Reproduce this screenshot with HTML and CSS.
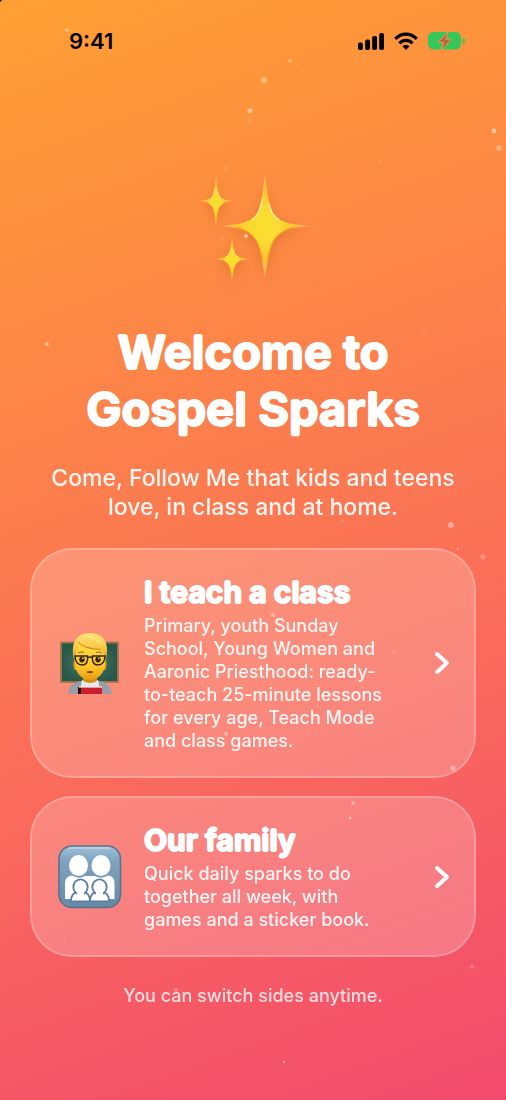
FILE: index.html
```html
<!DOCTYPE html>
<html lang="en">
<head>
<meta charset="utf-8">
<meta name="viewport" content="width=device-width, initial-scale=1">
<title>Gospel Sparks</title>
<link rel="stylesheet" href="styles.css">
</head>
<body>
<div class="screen">
  <header class="status">
    <span class="clock">9:41</span>
    <span class="indicators">
      <svg width="26" height="18" viewBox="0 0 26 18" aria-label="Signal"><rect x="0" y="10.500" width="4.800" height="7.500" rx="1.800"/><rect x="7.200" y="7.500" width="4.800" height="10.500" rx="1.800"/><rect x="14.200" y="4" width="4.800" height="14" rx="1.800"/><rect x="21.200" y="1" width="4.800" height="17" rx="1.800"/></svg>
      <svg width="24" height="18" viewBox="0 0 24 18" aria-label="Wi-Fi"><g fill="none" stroke="#000" stroke-width="3.200"><path d="M1.200 6.900Q6 2.100 12 2.100T22.800 6.900"/><path d="M5.400 11.300Q8.300 8.400 12 8.400T18.600 11.300"/></g><path d="M8.400 14.300Q12 11.200 15.600 14.300L12 18z"/></svg>
      <svg width="38" height="20" viewBox="0 0 38 20" aria-label="Battery charging"><rect x="0" y="1" width="33" height="17.500" rx="5.500" fill="#34c759"/><path d="M34.500 6.500q3 .8 3 3.200t-3 3.200z" fill="#34c759" opacity=".75"/><path d="M20.500.3 10 11.300h5.500L13 19.500l10.500-11.300h-5.600z" fill="#b9693a" stroke="#ff9247" stroke-width="1"/></svg>
    </span>
  </header>

  <main class="content">
    <svg class="sparkles" width="120" height="110" viewBox="0 0 120 110" aria-hidden="true">
      <defs>
        <radialGradient id="gold"><stop offset="0" stop-color="#f8e02c"/><stop offset=".35" stop-color="#fbd932"/><stop offset=".6" stop-color="#ffc531"/><stop offset=".85" stop-color="#ffbd52" stop-opacity=".9"/><stop offset="1" stop-color="#ffb670" stop-opacity=".55"/></radialGradient>
        <g id="star">
          <path fill="url(#gold)" d="M0-52C2.500-32 4-20 8-13 12-6 20-3.500 28-2L45 0 28 2C19 4 13 8 9 14 5 21 3 32 0 52-3 32-5 21-9 14-13 8-19 4-28 2L-45 0-28-2C-20-3.500-12-6-8-13-4-20-2.500-32 0-52z"/>
          <path fill="none" stroke="#fff3b0" stroke-width="1.500" stroke-linecap="round" opacity=".7" d="M-2.500-27C-4-18-7-10-12-7M4-22C6-14 9-9 14-6.500"/>
          <path fill="none" stroke="#f2a01c" stroke-width="1.500" stroke-linecap="round" opacity=".75" d="M28 1.500C19 4 13 8 9 14 6 19 4 26 2.500 34M-28 1.500C-19 4-13 8-9 14-6 19-4 26-2.500 34"/>
        </g>
      </defs>
      <use href="#star" x="72" y="54"/>
      <use href="#star" transform="translate(23 29) scale(.37 .48)"/>
      <use href="#star" transform="translate(39 87) scale(.41 .41)"/>
    </svg>
    <h1 class="title">Welcome to<br>Gospel Sparks</h1>
    <p class="lead">Come, Follow Me that kids and teens love, in class and at home.</p>

    <div class="choices">
      <button class="card" type="button">
        <svg class="emoji" width="64" height="64" viewBox="0 0 64 64" aria-hidden="true">
          <defs>
            <linearGradient id="skin" x1="0" y1="0" x2="0" y2="1"><stop offset="0" stop-color="#ffdc4a"/><stop offset=".65" stop-color="#ffc928"/><stop offset="1" stop-color="#e99b12"/></linearGradient>
            <linearGradient id="hair" x1="0" y1="0" x2="0" y2="1"><stop offset="0" stop-color="#ffe476"/><stop offset=".6" stop-color="#f9c341"/><stop offset="1" stop-color="#d98f1d"/></linearGradient>
            <radialGradient id="board"><stop offset="0" stop-color="#4d8069"/><stop offset="1" stop-color="#28584a"/></radialGradient>
          </defs>
          <rect x="3" y="11.500" width="57" height="39.500" fill="url(#board)" stroke="#a3754a" stroke-width="1.800"/>
          <path d="M10 63c1-8 4-11 13-13h18c9 2 12 5 13 13z" fill="#9a9da5"/>
          <path d="M24 49h16l3 14H21z" fill="#e8e9ee"/>
          <path d="M25 44h14v6q-7 4-14 0z" fill="#d68f12"/>
          <path d="M17 26c-2 4-2 9-.500 13h3V26zM47 26c2 4 2 9 .500 13h-3V26z" fill="#dc9b20"/>
          <path d="M17 19c1-16 29-16 30 0v13c0 10-7 17-15 17s-15-7-15-17z" fill="url(#skin)"/>
          <path d="M16 29C12 11 19 2 32 2s20 9 16 27l-2-2c0-4-1-7-3-9-9 1-17-2-22-7-1 6-3 9-4 16z" fill="url(#hair)"/>
          <path d="M20 11q6 7 23 7.500" fill="none" stroke="#c9821a" stroke-width="1"/>
          <path d="M24 6q9-3 18 6" fill="none" stroke="#fff1a6" stroke-width="1.200" opacity=".7"/>
          <path d="M20 22q3-2 6-.5M38 21.500q3-1.500 6 .5" stroke="#9b641d" stroke-width="1" fill="none"/>
          <ellipse cx="24" cy="28.500" rx="2.700" ry="3" fill="#41220f"/><ellipse cx="40" cy="28.500" rx="2.700" ry="3" fill="#41220f"/>
          <circle cx="24.800" cy="27.300" r=".8" fill="#fff"/><circle cx="40.800" cy="27.300" r=".8" fill="#fff"/>
          <path d="M17 25h12.500q1 9-5.500 9t-7-9zM34.500 25H47q-.5 9-7 9t-5.500-9zM29.500 27q2.500-2 5 0" fill="none" stroke="#34271f" stroke-width="1.500"/>
          <path d="M29 41q3-1 6 0-3 1.600-6 0z" fill="#8d3d18" stroke="#6f3314" stroke-width=".7"/>
          <path d="M20 56h24v7H20z" fill="#c81f2b"/><path d="M20 56h3v7h-3z" fill="#220d16"/><path d="M21 56h23" stroke="#f0e3e2" stroke-width="1.300"/>
        </svg>
        <span class="copy">
          <span class="heading">I teach a class</span>
          <span class="detail">Primary, youth Sunday School, Young Women and Aaronic Priesthood: ready-to-teach 25-minute lessons for every age, Teach Mode and class games.</span>
        </span>
        <svg class="chevron" width="16" height="24" viewBox="0 0 16 24" aria-hidden="true"><path d="M3 3l10 9-10 9"/></svg>
      </button>

      <button class="card" type="button">
        <svg class="emoji" width="64" height="64" viewBox="0 0 64 64" aria-hidden="true">
          <defs><linearGradient id="tile" x1="0" y1="0" x2="0" y2="1"><stop offset="0" stop-color="#a0bfd6"/><stop offset=".25" stop-color="#7fa3bf"/><stop offset="1" stop-color="#6689a6"/></linearGradient></defs>
          <rect x="1" y="1" width="61.500" height="61.500" rx="13" fill="url(#tile)" stroke="#56748e" stroke-width="1.600"/>
          <path d="M11 3h41" stroke="#c5dceb" stroke-width="1.300" stroke-linecap="round" opacity=".8"/>
          <g fill="#fff"><ellipse cx="20.500" cy="20.500" rx="9.500" ry="10.500"/><ellipse cx="43" cy="20.500" rx="9.500" ry="10.500"/><path d="M7 54V38q0-7 7-7.500 6.500 4 13 .5h10q6.500 3.500 13-.5 6.500.5 6.500 7.500v16z"/></g>
          <g fill="#fff" stroke="#5b7d9c" stroke-width="3.600" stroke-linejoin="round" paint-order="stroke">
            <path d="M14 55.500q0-6.500 6-8h5q6 1.500 6 8z"/>
            <path d="M33 55.500q0-6.500 6-8h5q6 1.500 6 8z"/>
            <ellipse cx="22.500" cy="42" rx="6.300" ry="6.800"/><ellipse cx="41.500" cy="42" rx="6.300" ry="6.800"/>
          </g>
          <path fill="#fff" d="M19 45h7v6h-7zM38 45h7v6h-7z"/>
        </svg>
        <span class="copy">
          <span class="heading">Our family</span>
          <span class="detail">Quick daily sparks to do together all week, with games and a sticker book.</span>
        </span>
        <svg class="chevron" width="16" height="24" viewBox="0 0 16 24" aria-hidden="true"><path d="M3 3l10 9-10 9"/></svg>
      </button>
    </div>
    <p class="note">You can switch sides anytime.</p>
  </main>

  <svg class="dust" viewBox="0 0 506 1100" preserveAspectRatio="xMidYMin slice" aria-hidden="true">
    <g fill="#fff">
      <circle cx="67" cy="30" r="1.800" opacity=".45"/><circle cx="43" cy="122" r="1.500" opacity=".1"/><circle cx="250" cy="111" r="2.500" opacity=".45"/><circle cx="249" cy="121" r="2" opacity=".15"/>
      <circle cx="290" cy="61" r="1.700" opacity=".35"/><circle cx="303" cy="70" r="1" opacity=".2"/><circle cx="264" cy="80" r="2.800" opacity=".4"/><circle cx="494" cy="131" r="2.400" opacity=".5"/>
      <circle cx="499" cy="148" r="2.700" opacity=".35"/><circle cx="380" cy="161" r="2" opacity=".1"/><circle cx="225" cy="168" r="1.500" opacity=".2"/><circle cx="246" cy="236" r="2" opacity=".5"/>
      <circle cx="222" cy="238" r="2" opacity=".1"/><circle cx="47" cy="344" r="2" opacity=".4"/><circle cx="424" cy="333" r="1.500" opacity=".2"/><circle cx="503" cy="309" r="1.500" opacity=".1"/>
      <circle cx="451" cy="525" r="2.800" opacity=".45"/><circle cx="343" cy="520" r="1.500" opacity=".15"/><circle cx="483" cy="557" r="2.700" opacity=".22"/><circle cx="458" cy="549" r="1" opacity=".4"/>
      <circle cx="273" cy="615" r="2" opacity=".35"/><circle cx="394" cy="652" r="2" opacity=".15"/><circle cx="453" cy="768" r="2.600" opacity=".4"/><circle cx="226" cy="734" r="2.200" opacity=".3"/>
      <circle cx="353" cy="803" r="2" opacity=".4"/><circle cx="350" cy="818" r="1.600" opacity=".45"/><circle cx="472" cy="967" r="2" opacity=".22"/><circle cx="284" cy="1062" r="1.200" opacity=".5"/>
      <circle cx="176" cy="990" r="2" opacity=".25"/><circle cx="177" cy="474" r="2" opacity=".35"/><circle cx="145" cy="472" r="1.500" opacity=".25"/><circle cx="366" cy="479" r="2" opacity=".25"/><circle cx="65" cy="939" r="1.200" opacity=".15"/>
    </g>
    <path d="M0 0h2L0 2z" fill="#000"/>
  </svg>
</div>
</body>
</html>
```

FILE: styles.css
```css
* { box-sizing: border-box; }

body {
  margin: 0;
  font-family: Inter, "Liberation Sans", sans-serif;
  color: #fff;
}

.screen {
  position: relative;
  min-height: 100vh;
  background: linear-gradient(160deg, #ffa033 0%, #fa6c5b 62%, #f24a6e 100%);
}

.status {
  display: flex;
  justify-content: space-between;
  align-items: center;
  padding: 28px 40px 0 69px;
  color: #000;
}

.clock {
  font-size: 22px;
  line-height: 26px;
  font-weight: 600;
}

.indicators {
  display: flex;
  align-items: center;
  gap: 10px;
}

.content {
  display: flex;
  flex-direction: column;
  align-items: center;
  padding: 118px 30px 40px;
}

.sparkles {
  filter: drop-shadow(0 4px 6px rgba(150, 60, 0, 0.25));
}

/* The ring of one-pixel shadows thickens the letters and rounds their corners. */
.title,
.heading {
  font-weight: 700;
  text-shadow: 1px 0 #fff, -1px 0 #fff, 0 1px #fff, 0 -1px #fff;
}

.title {
  margin: 41px 0 0;
  font-size: 47px;
  line-height: 57px;
  text-align: center;
}

.lead {
  max-width: 420px;
  margin: 27px 0 0;
  font-size: 23px;
  line-height: 29px;
  font-weight: 500;
  text-align: center;
  opacity: 0.92;
}

.choices {
  display: flex;
  flex-direction: column;
  gap: 18px;
  width: 100%;
  margin-top: 26px;
}

.card {
  display: flex;
  align-items: center;
  gap: 22px;
  width: 100%;
  padding: 24px 24px 24px 26px;
  border: 2px solid rgba(255, 255, 255, 0.38);
  border-radius: 42px;
  background: rgba(255, 255, 255, 0.2);
  background-clip: padding-box;
  color: #fff;
  font-family: inherit;
  text-align: left;
}

.emoji,
.chevron {
  flex: none;
}

.chevron {
  fill: none;
  stroke: #fff;
  stroke-width: 4px;
  stroke-linecap: round;
  stroke-linejoin: round;
}

.copy {
  display: flex;
  flex: 1;
  flex-direction: column;
  gap: 4px;
  padding-right: 24px;
}

.heading {
  font-size: 30px;
  line-height: 36px;
}

.detail {
  font-size: 18px;
  line-height: 23px;
  font-weight: 500;
  opacity: 0.92;
}

.note {
  margin: 28px 0 0;
  font-size: 18px;
  line-height: 22px;
  font-weight: 500;
  opacity: 0.8;
}

.dust {
  position: absolute;
  inset: 0;
  width: 100%;
  height: 100%;
  pointer-events: none;
}
```
